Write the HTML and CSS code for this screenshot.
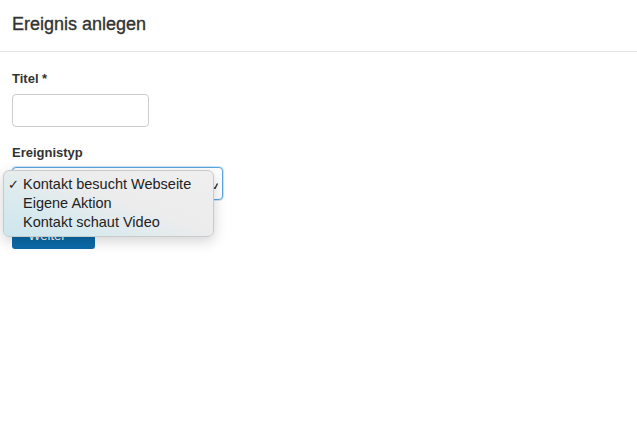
FILE: index.html
```html
<!DOCTYPE html>
<html lang="de">
<head>
<meta charset="utf-8">
<link rel="stylesheet" href="styles.css">
</head>
<body>
<div class="modal">
  <div class="modal-header"><h4 class="title">Ereignis anlegen</h4></div>
  <div class="modal-body">
    <div class="group">
      <label class="label">Titel *</label>
      <div class="input"></div>
    </div>
    <div class="group">
      <label class="label label-2">Ereignistyp</label>
      <div class="select-wrap">
        <div class="select">
          <svg class="caret" width="8" height="8" viewBox="0 0 8 8"><path d="M1.5 5.5 L4 7.5 L6.5 2.5" fill="none" stroke="#333" stroke-width="1.4"/></svg>
        </div>
        <div class="menu">
          <div class="item"><span class="check">✓</span>Kontakt besucht Webseite</div>
          <div class="item"><span class="check"></span>Eigene Aktion</div>
          <div class="item"><span class="check"></span>Kontakt schaut Video</div>
        </div>
      </div>
    </div>
    <button class="btn">Weiter
      <svg width="8" height="8" viewBox="0 0 8 8"><path d="M1 2.5 L4 6 L7 2.5 Z" fill="#fff"/></svg>
    </button>
  </div>
</div>
</body>
</html>
```

FILE: styles.css
```css
* { box-sizing: border-box; }
html, body { margin: 0; padding: 0; background: #fff; }
body { font-family: "Liberation Sans", Arial, sans-serif; color: #333; width: 637px; height: 438px; overflow: hidden; }
.modal-header { height: 52px; border-bottom: 1px solid #e5e5e5; padding: 0 12px; display: flex; align-items: center; }
.title { margin: 0; font-size: 18px; font-weight: normal; color: #333; position: relative; top: -1px; -webkit-text-stroke: 0.35px #333; }
.modal-body { padding: 19px 12px; display: flex; flex-direction: column; align-items: flex-start; }
.group { display: flex; flex-direction: column; margin-bottom: 18px; }
.label { font-size: 13px; font-weight: bold; color: #333; margin-bottom: 8px; line-height: 15px; }
.label-2 { margin-bottom: 7px; }
.input { width: 137px; height: 33px; border: 1px solid #ccc; border-radius: 4px; background: #fff; }
.select-wrap { position: relative; }
.select { width: 211px; height: 33px; border: 1px solid #5aa6e0; border-radius: 4px; background: #fff; position: relative; box-shadow: 0 0 0 1px rgba(90,166,224,0.3); }
.caret { position: absolute; right: 3px; top: 13px; }
.menu { position: absolute; left: -9px; top: 3px; width: 211px; height: 67px; border-radius: 6px; border: 1px solid #c8cbcc;
  background: linear-gradient(200deg, #efefef 0%, #ececec 45%, #d8eaee 75%, #cde6ee 100%);
  box-shadow: 0 4px 14px rgba(0,0,0,0.18); padding-top: 4px; z-index: 5; }
.item { font-size: 14.5px; line-height: 19px; height: 19px; color: #222; display: flex; align-items: center; font-family: "Liberation Sans", Arial, sans-serif; }
.check { width: 19px; padding-left: 4px; font-size: 13px; display: inline-block; }
.btn { margin-top: 3px; width: 83px; height: 28px; background: #0b6aa8; color: #fff; border: 0; border-radius: 3px; font-family: "Liberation Sans", Arial, sans-serif; font-size: 13px; display: flex; align-items: center; justify-content: center; gap: 5px; padding: 0; }
```
